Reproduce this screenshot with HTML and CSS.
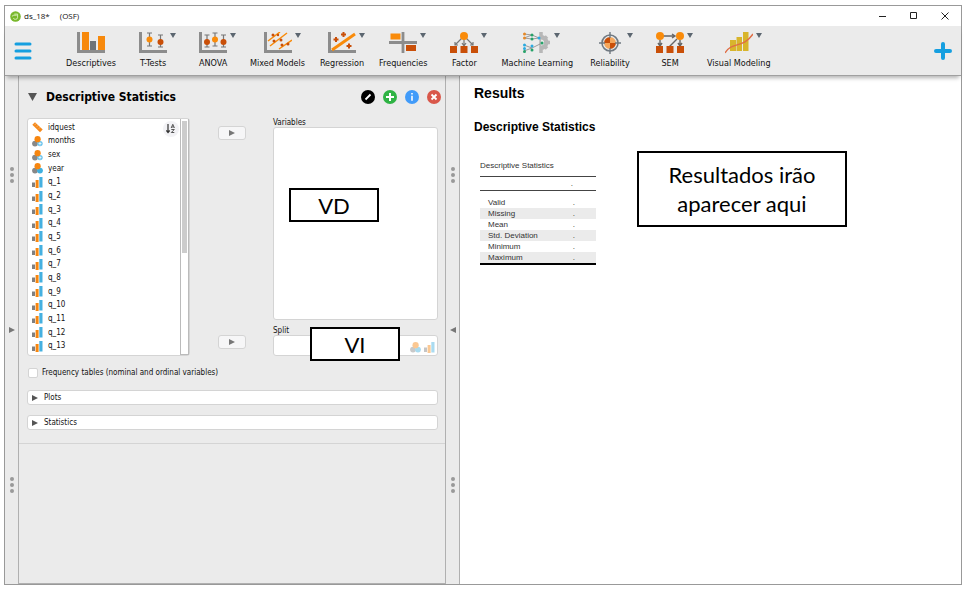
FILE: index.html
```html
<!DOCTYPE html>
<html lang="en">
<head>
<meta charset="utf-8">
<title>ds_18* (OSF)</title>
<link rel="stylesheet" href="styles.css">
</head>
<body>
<svg class="defs" aria-hidden="true">
  <symbol id="axes" viewBox="0 0 28 22"><path d="M1.5 0V19.5H28" fill="none" stroke="#8c8c8c" stroke-width="3"/></symbol>
  <symbol id="nominal" viewBox="0 0 11 11"><circle cx="3" cy="7.6" r="2.9" fill="#888"/><circle cx="8" cy="7.6" r="2.9" fill="#3fb0e0"/><circle cx="5.6" cy="3.2" r="3.1" fill="#f7860f"/></symbol>
  <symbol id="nominal-text" viewBox="0 0 11 11"><circle cx="3" cy="7.6" r="2.9" fill="#888"/><circle cx="8" cy="7.6" r="2.7" fill="#6cc3ec"/><path d="M8 6v3.5M6.5 7.5h3" stroke="#fff" stroke-width=".7"/><circle cx="5.6" cy="3.2" r="3.1" fill="#f7860f"/></symbol>
  <symbol id="ordinal" viewBox="0 0 11 11"><path d="M0 5.5h3V10H0z" fill="#808080"/><path d="M3.6 3h3v8h-3z" fill="#f7860f"/><path d="M7.3 0h3.2v10.5H7.3z" fill="#45b0e0"/></symbol>
  <symbol id="scale" viewBox="0 0 11 11"><path d="M.3 2.7 3 .3 10.7 7.6 8 10.3z" fill="#f58a1d"/><path d="M4 1.5 3 2.7M6 3.5 5 4.6M8 5.4 7 6.5" stroke="#fff" stroke-width=".5"/></symbol>
  <symbol id="right" viewBox="0 0 6 6"><path d="M0 0 6 3 0 6z" fill="currentColor"/></symbol>
</svg>

<main class="window">
  <header class="titlebar">
    <svg class="logo" viewBox="0 0 11 11" aria-hidden="true"><circle cx="5.5" cy="5.5" r="5.3" fill="#79b82c"/><path d="M4.3 3.1h3.3v3.2q0 2-2 2T3.300 7.300M2.300 5.500q0-1.300 1.500-1.300h3" fill="none" stroke="#d6efb5" stroke-width="1"/></svg>
    <span>ds_18*</span><span class="place">(OSF)</span>
    <div class="controls">
      <button type="button" aria-label="Minimize"><svg viewBox="0 0 8 8"><path d="M0 4.500h7"/></svg></button>
      <button type="button" aria-label="Maximize"><svg viewBox="0 0 8 8"><path d="M.5.5h6v6h-6z"/></svg></button>
      <button type="button" aria-label="Close"><svg viewBox="0 0 8 8"><path d="M.5.5l7 7M7.500.5l-7 7"/></svg></button>
    </div>
  </header>

  <nav class="toolbar">
    <button type="button" class="menu" aria-label="Main menu"><svg viewBox="0 0 18 18"><path d="M2 2h14M2 9h14M2 16h14"/></svg></button>
    <div class="modules">
      <button type="button" class="module"><span class="art"><svg class="icon" viewBox="0 0 28 22"><use href="#axes"/><path d="M5 0h7v18H5zM21 4h7v14h-7z" fill="#f7890c"/><path d="M13 9h6v9h-6z" fill="#6d7378"/></svg></span>Descriptives</button>
      <button type="button" class="module"><span class="art drop"><svg class="icon" viewBox="0 0 28 22"><use href="#axes"/><path d="M10.500 1v13M21.500 3v12M8 1h5M8 14h5M19 3h5M19 15h5" stroke="#777" stroke-width="1.200"/><circle cx="10.500" cy="7.500" r="3" fill="#f98b0a"/><circle cx="21.500" cy="10" r="3" fill="#c94f08"/></svg></span>T-Tests</button>
      <button type="button" class="module"><span class="art drop"><svg class="icon" viewBox="0 0 28 22"><use href="#axes"/><path d="M8 3v12M16 1v13M24.500 3v12M5.500 3h5M5.500 15h5M13.500 1h5M13.500 14h5M22 3h5M22 15h5" stroke="#777" stroke-width="1.200"/><circle cx="8" cy="10" r="3" fill="#c94f08"/><circle cx="16" cy="7.500" r="3" fill="#f98b0a"/><circle cx="24.500" cy="10" r="3" fill="#c94f08"/></svg></span>ANOVA</button>
      <button type="button" class="module"><span class="art drop"><svg class="icon" viewBox="0 0 28 22"><use href="#axes"/><path d="M4 9 16 0M6 14 23 1M15 17 28 8" stroke="#f98b0a" stroke-width="1.500"/><g fill="#c94f08"><circle cx="9" cy="3" r="1.500"/><circle cx="14" cy="3" r="1.200"/><circle cx="10" cy="9" r="1.500"/><circle cx="17" cy="8" r="1.500"/><circle cx="18" cy="13" r="1.500"/><circle cx="24" cy="12" r="1.500"/></g></svg></span>Mixed Models</button>
      <button type="button" class="module"><span class="art drop"><svg class="icon" viewBox="0 0 28 22"><use href="#axes"/><path d="M4 18 27 2" stroke="#f98b0a" stroke-width="2.800"/><path d="M8 5v5M5.500 7.500h5M15.500 0v5M13 2.500h5M21 11.500v5M18.500 14h5" stroke="#c94f08" stroke-width="2"/></svg></span>Regression</button>
      <button type="button" class="module"><span class="art drop"><svg class="icon" viewBox="0 0 28 22"><path d="M14 0v21M0 10.500h28" stroke="#8c8c8c" stroke-width="2.800"/><path d="M1.500 1.500h10v6h-10z" fill="#f98b0a"/><path d="M17 13h10v6H17z" fill="#c94f08"/></svg></span>Frequencies</button>
      <button type="button" class="module"><span class="art drop"><svg class="icon" viewBox="0 0 28 22"><path d="M14 5v9M12 6 5 13M16 6l7 7M12 11l2 3 2-3M5 10v3h3M23 10v3h-3" fill="none" stroke="#777" stroke-width="1.200"/><circle cx="14" cy="4" r="4" fill="#f98b0a"/><path d="M0 14h7v7H0zM10.500 14h7v7h-7zM21 14h7v7h-7z" fill="#c94f08"/></svg></span>Factor</button>
      <button type="button" class="module"><span class="art drop"><svg class="icon" viewBox="0 0 28 22"><g stroke="#b7b7b7" stroke-width="3.500"><path d="M18 0v21M18 10.500h9M18 10.500l6-6M18 10.500l6 6"/></g><path d="M18 3a7.500 7.500 0 0 1 0 15z" fill="#b7b7b7"/><path d="M18 7.500a3 3 0 0 1 0 6z" fill="#ececec"/><path d="M1 2l8 1M1 6l8-3M1 6l8 1M1 13l8 3M1 19l8-3M9 3l7 3M9 7l7-1M9 16l8-4" stroke="#888" stroke-width=".8"/><g fill="#e58827"><circle cx="1.500" cy="2" r="1.500"/><circle cx="1.500" cy="6" r="1.500"/></g><g fill="#2aaae0"><circle cx="1.500" cy="13" r="1.500"/><circle cx="1.500" cy="16.500" r="1.500"/><circle cx="9" cy="14" r="1.500"/><circle cx="16" cy="6" r="1.500"/></g><g fill="#26a269"><circle cx="9" cy="3" r="1.500"/><circle cx="9" cy="7" r="1.500"/><circle cx="1.500" cy="19.500" r="1.500"/><circle cx="9" cy="18" r="1.500"/><circle cx="19" cy="11" r="1.500"/></g></svg></span>Machine Learning</button>
      <button type="button" class="module"><span class="art drop"><svg class="icon" viewBox="0 0 28 22"><circle cx="14" cy="11" r="8" fill="none" stroke="#707981" stroke-width="1.600"/><path d="M14 5a6 6 0 0 0-6 6h6zM20 11a6 6 0 0 1-6 6v-6z" fill="#c94f08"/><path d="M14 5a6 6 0 0 1 6 6h-6v6a6 6 0 0 1-6-6h6z" fill="#f5a65b"/><path d="M14 0v6M14 16v6M3 11h6M19 11h6" stroke="#707981" stroke-width="1.400"/></svg></span>Reliability</button>
      <button type="button" class="module"><span class="art drop"><svg class="icon" viewBox="0 0 28 22"><path d="M7 4h11M16 2l3 2-3 2M4 8v6M2 11l2 3 2-3M24 8v6M22 11l2 3 2-3M21 7l-8 8" fill="none" stroke="#666" stroke-width="1.400"/><circle cx="4" cy="4" r="4" fill="#f98b0a"/><circle cx="24" cy="4" r="4" fill="#f98b0a"/><path d="M0 14h7v7H0zM10.500 14h7v7h-7zM21 14h7v7h-7z" fill="#c94f08"/></svg></span>SEM</button>
      <button type="button" class="module"><span class="art drop"><svg class="icon" viewBox="0 0 28 22"><path d="M5 8h6v11H5zM11.500 5h5.500v14h-5.500zM18 0h5.500v19H18z" fill="#d8b52c"/><path d="M0 21C7 9 18 17 28 2" fill="none" stroke="#df6d45" stroke-width="1.400"/></svg></span>Visual Modeling</button>
    </div>
    <button type="button" class="add" aria-label="Add module"><svg viewBox="0 0 18 18"><path d="M9 2v14M2 9h14"/></svg></button>
  </nav>

  <div class="workspace">
    <div class="rail">
      <span class="dots"><i></i><i></i><i></i></span>
      <svg class="mark" aria-hidden="true"><use href="#right"/></svg>
      <span class="dots"><i></i><i></i><i></i></span>
    </div>

    <section class="panel">
      <form class="analysis">
        <header class="heading">
          <svg class="fold" viewBox="0 0 9 8" aria-hidden="true"><path d="M0 0h9L4.500 8z" fill="#555"/></svg>
          <h1>Descriptive Statistics</h1>
          <div class="actions">
            <button type="button" aria-label="Edit title"><svg viewBox="0 0 14 14"><circle cx="7" cy="7" r="7"/><path d="M4.500 9.500l5-5" stroke="#fff" stroke-width="1.800"/></svg></button>
            <button type="button" aria-label="Duplicate"><svg viewBox="0 0 14 14"><circle cx="7" cy="7" r="7" fill="#2fb344"/><path d="M7 3v8M3 7h8" stroke="#fff" stroke-width="2"/></svg></button>
            <button type="button" aria-label="Information"><svg viewBox="0 0 14 14"><circle cx="7" cy="7" r="7" fill="#419bf9"/><path d="M7 3v1.600M7 5.800v5" stroke="#e5f1ff" stroke-width="1.800"/></svg></button>
            <button type="button" aria-label="Remove"><svg viewBox="0 0 14 14"><circle cx="7" cy="7" r="7" fill="#d9574a"/><path d="M4.500 4.500l5 5M9.500 4.500l-5 5" stroke="#fff" stroke-width="1.800"/></svg></button>
          </div>
        </header>

        <div class="assign">
          <div class="source">
            <ul>
              <li><svg><use href="#scale"/></svg>idquest</li>
              <li><svg><use href="#nominal-text"/></svg>months</li>
              <li><svg><use href="#nominal-text"/></svg>sex</li>
              <li><svg><use href="#nominal"/></svg>year</li>
              <li><svg><use href="#ordinal"/></svg>q_1</li>
              <li><svg><use href="#ordinal"/></svg>q_2</li>
              <li><svg><use href="#ordinal"/></svg>q_3</li>
              <li><svg><use href="#ordinal"/></svg>q_4</li>
              <li><svg><use href="#ordinal"/></svg>q_5</li>
              <li><svg><use href="#ordinal"/></svg>q_6</li>
              <li><svg><use href="#ordinal"/></svg>q_7</li>
              <li><svg><use href="#ordinal"/></svg>q_8</li>
              <li><svg><use href="#ordinal"/></svg>q_9</li>
              <li><svg><use href="#ordinal"/></svg>q_10</li>
              <li><svg><use href="#ordinal"/></svg>q_11</li>
              <li><svg><use href="#ordinal"/></svg>q_12</li>
              <li><svg><use href="#ordinal"/></svg>q_13</li>
            </ul>
            <button type="button" class="sort" aria-label="Sort variables"><svg viewBox="0 0 10 10"><path d="M2 0v8M.3 6.500 2 8.500 3.700 6.500" fill="none" stroke="#333" stroke-width="1.200"/><path d="M5.200 4 6.800.3 8.400 4M5.800 3h2M5.300 5.500h3L5.300 8.500h3" fill="none" stroke="#444" stroke-width=".9"/></svg></button>
            <div class="track"><div class="thumb"></div></div>
          </div>
          <div class="movers">
            <button type="button" aria-label="Move to Variables"><svg><use href="#right"/></svg></button>
            <button type="button" aria-label="Move to Split"><svg><use href="#right"/></svg></button>
          </div>
          <div class="targets">
            <span class="caption">Variables</span>
            <div class="box variables"><p class="callout dependent">VD</p></div>
            <span class="caption split-caption">Split</span>
            <div class="box split">
              <svg><use href="#nominal"/></svg><svg><use href="#ordinal"/></svg>
              <p class="callout independent">VI</p>
            </div>
          </div>
        </div>

        <label class="check"><input type="checkbox">Frequency tables (nominal and ordinal variables)</label>
        <button type="button" class="section"><svg><use href="#right"/></svg>Plots</button>
        <button type="button" class="section"><svg><use href="#right"/></svg>Statistics</button>
      </form>
    </section>

    <div class="rail">
      <span class="dots"><i></i><i></i><i></i></span>
      <svg class="mark back" aria-hidden="true"><use href="#right"/></svg>
      <span class="dots"><i></i><i></i><i></i></span>
    </div>

    <section class="results">
      <h2>Results</h2>
      <h3>Descriptive Statistics</h3>
      <table>
        <caption>Descriptive Statistics</caption>
        <thead><tr><th></th><th>.</th></tr></thead>
        <tbody>
          <tr><td>Valid</td><td>.</td></tr>
          <tr><td>Missing</td><td>.</td></tr>
          <tr><td>Mean</td><td>.</td></tr>
          <tr><td>Std. Deviation</td><td>.</td></tr>
          <tr><td>Minimum</td><td>.</td></tr>
          <tr><td>Maximum</td><td>.</td></tr>
        </tbody>
      </table>
      <p class="callout notice">Resultados irão aparecer aqui</p>
    </section>
  </div>
</main>
</body>
</html>
```
FILE: styles.css
```css
* { box-sizing: border-box; }

body {
  margin: 0;
  height: 100vh;
  padding: 5px 5px 5px 4px;
  background: #fff;
  color: #111;
  font: 8px/10px "DejaVu Sans Condensed", "DejaVu Sans", sans-serif;
}

h1, h2, h3, p, ul { margin: 0; padding: 0; }
svg { display: block; flex: none; }
.defs { position: absolute; width: 0; height: 0; }

button {
  margin: 0;
  padding: 0;
  border: 0;
  background: none;
  color: inherit;
  font: inherit;
}

.window {
  display: flex;
  flex-direction: column;
  height: 100%;
  border: 1px solid #999;
}

/* Title bar */
.titlebar {
  display: flex;
  align-items: center;
  height: 20px;
  padding: 0 12px 0 5px;
  font-family: "Open Sans", sans-serif;
}
.logo { width: 11px; height: 11px; margin-right: 3px; }
.place { margin-left: 10px; }
.controls { display: flex; gap: 23px; margin-left: auto; }
.controls svg { width: 8px; height: 8px; fill: none; stroke: #222; }

/* Toolbar */
.toolbar {
  position: relative;
  z-index: 1;
  display: flex;
  align-items: center;
  height: 50px;
  padding: 0 9px;
  background: #ebebeb;
  border-bottom: 1px solid #a0a0a0;
  box-shadow: 0 4px 4px -2px rgba(0, 0, 0, .3);
}
.menu svg, .add svg {
  width: 18px;
  height: 18px;
  fill: none;
  stroke: #159fe0;
  stroke-width: 3;
  stroke-linecap: round;
}
.add { margin-left: auto; }
.add svg { stroke-width: 4; }
.modules { display: flex; gap: 14px; margin-left: 34px; }
.module {
  display: flex;
  flex-direction: column;
  align-items: center;
  gap: 3px;
  min-width: 46px;
  font-size: 9px;
  line-height: 12px;
  white-space: nowrap;
}
.art {
  display: flex;
  justify-content: center;
  position: relative;
  width: 46px;
}
.icon { width: 28px; height: 22px; }
.drop::after {
  content: "";
  position: absolute;
  top: 1px;
  right: 0;
  border: 3px solid transparent;
  border-top: 5px solid #5c6670;
  border-bottom: 0;
}

/* Workspace */
.workspace {
  flex: 1;
  display: grid;
  grid-template-columns: 14px 427fr 14px 501fr;
  min-height: 0;
}
.rail {
  display: flex;
  flex-direction: column;
  align-items: center;
  justify-content: space-between;
  padding: 91px 0;
  background: #ebebeb;
  border-right: 1px solid #b0b0b0;
}
.dots { display: grid; gap: 2px; }
.dots i { width: 4px; height: 4px; border-radius: 50%; background: #999; }
.mark { width: 6px; height: 6px; color: #777; }
.back { transform: rotate(180deg); }

.panel {
  background: #ebebeb;
  border-right: 1px solid #b0b0b0;
  border-bottom: 1px solid #b0b0b0;
}
.analysis {
  padding: 14px 7px 13px 8px;
  border-bottom: 1px solid #d4d4d4;
}
.heading { display: flex; align-items: center; height: 14px; }
.fold { width: 9px; height: 8px; margin: 0 9px 0 1px; }
.heading h1 { font-size: 12px; line-height: 14px; color: #000; }
.actions { display: flex; gap: 8px; margin: 0 -3px 0 auto; }
.actions svg { width: 14px; height: 14px; }

.assign {
  display: grid;
  grid-template-columns: 163fr 83fr 165fr;
  margin-top: 14px;
}
.source {
  position: relative;
  display: flex;
  background: #fff;
  border: 1px solid #d4d4d4;
  border-radius: 3px;
}
.source ul {
  flex: 1;
  display: grid;
  grid-auto-rows: 1fr;
  padding: 2px 0 2px 4px;
  list-style: none;
}
.source li { display: flex; align-items: center; gap: 5px; }
.source li svg { width: 11px; height: 11px; }
.sort {
  position: absolute;
  top: 2px;
  right: 10px;
  display: grid;
  place-items: center;
  width: 16px;
  height: 16px;
  border-radius: 50%;
  background: #f2f2f5;
}
.sort svg { width: 10px; height: 10px; }
.track {
  width: 9px;
  padding: 2px 1px;
  border: 1px solid #bbb;
  border-top-width: 0;
}
.thumb { height: 57%; background: #ccc; }

.movers {
  display: flex;
  flex-direction: column;
  align-items: center;
  justify-content: space-between;
  padding: 8px 0 7px;
}
.movers button {
  display: grid;
  place-items: center;
  width: 28px;
  height: 14px;
  background: #f6f6f7;
  border: 1px solid #d4d4d4;
  border-radius: 3px;
  color: #777;
}
.movers svg, .section svg { width: 6px; height: 6px; }

.targets { display: flex; flex-direction: column; }
.caption { line-height: 9px; }
.split-caption { margin-top: 6px; }
.box {
  position: relative;
  background: #fff;
  border: 1px solid #d4d4d4;
  border-radius: 3px;
}
.variables { height: 193px; }
.split {
  display: flex;
  align-items: center;
  justify-content: flex-end;
  gap: 3px;
  height: 21px;
  padding: 3px 2px 0 0;
}
.split svg { width: 11px; height: 11px; opacity: .45; }

.check { display: flex; align-items: center; gap: 4px; margin: 12px 0 12px 1px; }
.check input {
  appearance: none;
  width: 10px;
  height: 10px;
  margin: 0;
  background: #fff;
  border: 1px solid #d4d4d4;
  border-radius: 2px;
}
.section {
  display: flex;
  align-items: center;
  gap: 6px;
  width: 100%;
  height: 15px;
  padding-left: 4px;
  background: #fff;
  border: 1px solid #d4d4d4;
  border-radius: 3px;
}
.section svg { color: #555; }
.section + .section { margin-top: 10px; }

/* Results */
.results {
  position: relative;
  padding: 9px 14px;
  font-family: "Liberation Sans", sans-serif;
}
.results h2 { font-size: 14px; line-height: 16px; color: #000; }
.results h3 { margin-top: 19px; font-size: 12px; line-height: 14px; color: #000; }
.results table {
  width: 116px;
  margin: 26px 0 0 6px;
  border-collapse: collapse;
  border-bottom: 2px solid #000;
  color: #333;
}
.results caption { padding-bottom: 4px; line-height: 12px; text-align: left; }
.results th {
  height: 14px;
  padding: 0 23px 0 0;
  border: solid #444;
  border-width: 1px 0;
  font-weight: 400;
  text-align: right;
}
.results td { height: 11px; padding: 0 0 0 8px; line-height: 11px; }
.results td:last-child { padding: 0 21px 0 0; text-align: right; }
.results tbody::before { content: ""; display: block; height: 6px; }
.results tbody tr:nth-child(even) { background: #ebebeb; }

/* Annotations laid over the window */
.callout {
  position: absolute;
  display: flex;
  align-items: center;
  justify-content: center;
  border: 2px solid #000;
  background: #fff;
  color: #000;
  font-family: Lato, sans-serif;
  font-size: 22px;
  line-height: 29px;
  text-align: center;
}
.dependent { top: 60px; left: 15px; width: 90px; height: 34px; }
.independent { top: -9px; left: 36px; width: 90px; height: 34px; }
.notice { top: 75px; left: 177px; width: 210px; height: 76px; padding: 0 20px; }
```
